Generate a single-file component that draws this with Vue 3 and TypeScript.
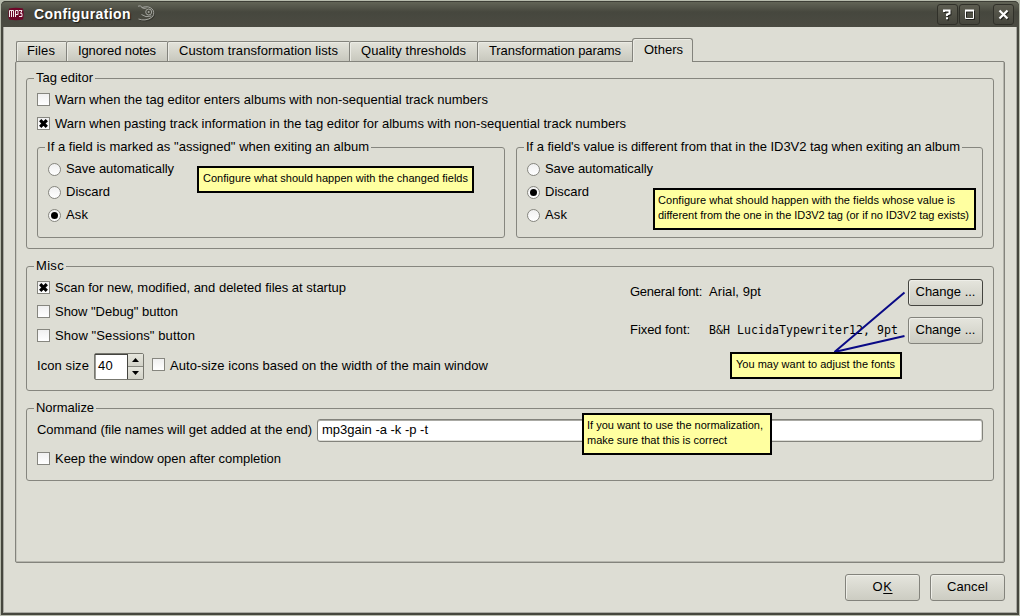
<script setup lang="ts">
import { ref } from 'vue'

interface Tab { label: string; width: number; text: number; lead: number }
interface Option { label: string; text: number }
interface Note { id: string; lines: Option[] }

const tabs: Tab[] = [
  { label: 'Files', width: 50, text: 28, lead: 10 },
  { label: 'Ignored notes', width: 101, text: 78, lead: 11 },
  { label: 'Custom transformation lists', width: 182, text: 159, lead: 11 },
  { label: 'Quality thresholds', width: 128, text: 105, lead: 11 },
  { label: 'Transformation params', width: 155, text: 132, lead: 11 },
  { label: 'Others', width: 61, text: 39, lead: 11 },
]
const activeTab = ref('Others')

const exitOptions: Option[] = [
  { label: 'Save automatically', text: 108 },
  { label: 'Discard', text: 44 },
  { label: 'Ask', text: 22 },
]
const exitGroups = ref([
  { title: 'If a field is marked as "assigned" when exiting an album', text: 322, selected: 'Ask' },
  { title: "If a field's value is different from that in the ID3V2 tag when exiting an album", text: 434, selected: 'Discard' },
])

const tagChecks = ref([
  { label: 'Warn when the tag editor enters albums with non-sequential track numbers', text: 433, on: false },
  { label: 'Warn when pasting track information in the tag editor for albums with non-sequential track numbers', text: 571, on: true },
])
const miscChecks = ref([
  { label: 'Scan for new, modified, and deleted files at startup', text: 291, on: true },
  { label: 'Show "Debug" button', text: 123, on: false },
  { label: 'Show "Sessions" button', text: 140, on: false },
])
const autoSize = ref(false)
const keepOpen = ref(false)

const notes: Note[] = [
  { id: 'changed', lines: [{ label: 'Configure what should happen with the changed fields', text: 265 }] },
  {
    id: 'differs',
    lines: [
      { label: 'Configure what should happen with the fields whose value is', text: 297 },
      { label: 'different from the one in the ID3V2 tag (or if no ID3V2 tag exists)', text: 311 },
    ],
  },
  { id: 'fonts', lines: [{ label: 'You may want to adjust the fonts', text: 159 }] },
  {
    id: 'gain',
    lines: [
      { label: 'If you want to use the normalization,', text: 176 },
      { label: 'make sure that this is correct', text: 140 },
    ],
  },
]

// Tracks a label so that it fills the given width in pixels.
const vFit = {
  mounted(el: HTMLElement, binding: { value: number }) {
    const range = document.createRange()
    range.selectNodeContents(el)
    const natural = range.getBoundingClientRect().width
    const count = (el.textContent ?? '').length
    el.style.letterSpacing = `${((binding.value - natural) / count).toFixed(4)}px`
  },
}
</script>

<template>
  <div class="window">
    <div class="frame">
      <header class="titlebar">
        <svg class="app-icon" width="16" height="14" viewBox="0 0 16 14">
          <path d="M1 1.5Q8 0 15 1.5Q16.4 7 15 12.5Q8 14 1 12.5Q-.4 7 1 1.5Z" fill="#6d0628" />
          <path d="M1.5 10V3.5H5.5V10M3.5 3.5V10M7.5 10V3.5H10V7.5H7.5M11 3.5H14L12.5 6.5H14V9.5H11" fill="none" stroke="#f4e8ec" stroke-width="1" />
        </svg>
        <span v-fit="97" class="title">Configuration</span>
        <svg class="swirl" width="20" height="18" viewBox="0 0 20 18" fill="none">
          <g stroke="#2a2a25" transform="translate(1 1)" opacity=".6">
            <path d="M14 3.5Q18.5 9 14.5 12.5Q9 16.5 1.5 14" />
          </g>
          <g stroke="#a3a49e">
            <path d="M1 1.2L3.5 .8L5 2.5Q12 0 16 5Q18 10 14.5 12.5Q8 16.5 1.5 14M4.5 2.5Q7 4 9.5 3M4.5 9.5Q8.5 13 14.5 11" />
            <circle cx="11.7" cy="7" r="3" />
          </g>
          <circle cx="11.7" cy="7" r="1" fill="#a3a49e" />
        </svg>
        <div class="controls">
          <button class="control" aria-label="Help">
            <svg width="19" height="19" viewBox="0 0 19 19" fill="none" stroke-width="2">
              <path d="M7 8V6.5H12.5V9.5L10 10.5V12M10 13.5V15.5" stroke="#22221e" />
              <path d="M6 7V5.5H11.5V8.5L9 9.5V11M9 12.2V14.2" stroke="#fff" />
            </svg>
          </button>
          <button class="control" aria-label="Maximize">
            <svg width="19" height="19" viewBox="0 0 19 19" fill="none">
              <path d="M6.5 12V7H13M14.5 6V14.5H6" stroke="#22221e" />
              <path d="M5.5 5.5H13.5V13.5H5.5Z" stroke="#fff" />
              <path d="M5 5.5H14" stroke="#fff" stroke-width="2" />
            </svg>
          </button>
          <button class="control close" aria-label="Close">
            <svg width="19" height="19" viewBox="0 0 19 19" fill="none" stroke-width="2.2">
              <path d="M6.5 6.5L14.5 14.5M14.5 6.5L6.5 14.5" stroke="#22221e" />
              <path d="M5.5 5.5L13.5 13.5M13.5 5.5L5.5 13.5" stroke="#fff" />
            </svg>
          </button>
        </div>
      </header>

      <main class="client">
        <nav class="tabs">
          <button
            v-for="tab in tabs"
            :key="tab.label"
            class="tab"
            :class="{ active: tab.label === activeTab }"
            :style="{ width: tab.width + 'px', paddingLeft: tab.lead + 'px' }"
            @click="activeTab = tab.label"
          ><span v-fit="tab.text">{{ tab.label }}</span></button>
        </nav>

        <section class="pane">
          <div class="group tag-editor">
            <div class="legend"><span v-fit="57">Tag editor</span></div>
            <div v-for="c in tagChecks" :key="c.label" class="check-row" @click="c.on = !c.on">
              <span class="box"><svg v-if="c.on" width="11" height="11" viewBox="0 0 11 11"><path d="M2.2 2.2L8.8 8.8M8.8 2.2L2.2 8.8" stroke="#000" stroke-width="3.2" /></svg></span>
              <span v-fit="c.text" class="label">{{ c.label }}</span>
            </div>
            <div class="exit-groups">
              <div v-for="g in exitGroups" :key="g.title" class="group exit">
                <div class="legend"><span v-fit="g.text">{{ g.title }}</span></div>
                <div v-for="o in exitOptions" :key="o.label" class="radio-row" @click="g.selected = o.label">
                  <span class="radio" :class="{ on: g.selected === o.label }"></span>
                  <span v-fit="o.text" class="label">{{ o.label }}</span>
                </div>
              </div>
            </div>
          </div>

          <div class="group misc">
            <div class="legend"><span v-fit="28">Misc</span></div>
            <div class="columns">
              <div class="left">
                <div v-for="c in miscChecks" :key="c.label" class="check-row" @click="c.on = !c.on">
                  <span class="box"><svg v-if="c.on" width="11" height="11" viewBox="0 0 11 11"><path d="M2.2 2.2L8.8 8.8M8.8 2.2L2.2 8.8" stroke="#000" stroke-width="3.2" /></svg></span>
                  <span v-fit="c.text" class="label">{{ c.label }}</span>
                </div>
                <div class="size-row">
                  <span class="size-label"><span v-fit="52">Icon size</span></span>
                  <div class="spin">
                    <div class="value"><span v-fit="15">40</span></div>
                    <div class="steps">
                      <span class="step"><svg width="7" height="4" viewBox="0 0 7 4"><path d="M0 4L3.5 0L7 4Z" /></svg></span>
                      <span class="step down"><svg width="7" height="4" viewBox="0 0 7 4"><path d="M0 0L3.5 4L7 0Z" /></svg></span>
                    </div>
                  </div>
                  <div class="check-row" @click="autoSize = !autoSize">
                    <span class="box"></span>
                    <span v-fit="318" class="label">Auto-size icons based on the width of the main window</span>
                  </div>
                </div>
              </div>
              <div class="fonts">
                <div class="font-row">
                  <span class="font-name"><span v-fit="72">General font:</span></span>
                  <span class="font-value"><span v-fit="52">Arial, 9pt</span></span>
                  <button class="button focused"><span v-fit="60">Change ...</span></button>
                </div>
                <div class="font-row">
                  <span class="font-name"><span v-fit="60">Fixed font:</span></span>
                  <span class="font-value mono"><span v-fit="189">B&amp;H LucidaTypewriter12, 9pt</span></span>
                  <button class="button"><span v-fit="60">Change ...</span></button>
                </div>
              </div>
            </div>
          </div>

          <div class="group normalize">
            <div class="legend"><span v-fit="58">Normalize</span></div>
            <div class="command-row">
              <span class="command-label"><span v-fit="275">Command (file names will get added at the end)</span></span>
              <div class="field"><span v-fit="106">mp3gain -a -k -p -t</span></div>
            </div>
            <div class="check-row" @click="keepOpen = !keepOpen">
              <span class="box"></span>
              <span v-fit="226" class="label">Keep the window open after completion</span>
            </div>
          </div>
        </section>

        <footer class="actions">
          <button class="button"><span v-fit="20">O<u>K</u></span></button>
          <button class="button"><span v-fit="41">Cancel</span></button>
        </footer>
      </main>
    </div>

    <svg class="pointers" width="76" height="66" viewBox="0 0 76 66">
      <path d="M74.5 2.5L4.5 62L74.5 46" fill="none" stroke="#0a0a86" stroke-width="2" />
    </svg>
    <div v-for="n in notes" :key="n.id" class="note" :class="n.id">
      <div v-for="l in n.lines" :key="l.label"><span v-fit="l.text">{{ l.label }}</span></div>
    </div>
  </div>
</template>

<style>
html, body { margin: 0; overflow: hidden; background: #c8c8c0; }
</style>

<style scoped>
.window, .window * { box-sizing: border-box; }
.window {
  position: relative;
  width: 1020px;
  height: 616px;
  padding: 1px;
  background: #b7bbad;
  font: 13px/16px "Liberation Sans", Arial, sans-serif;
  color: #000;
  white-space: nowrap;
  cursor: default;
}
.window span { white-space: pre; }
button { font: inherit; color: inherit; margin: 0; padding: 0; text-align: left; flex: none; }
svg { display: block; flex: none; }
.frame {
  height: 614px;
  padding: 0 1px 2px 1px;
  border-radius: 5px 5px 0 0;
  background: #46473e;
  border: 0 solid #46473e;
  border-width: 0 1px 0 1px;
}
.titlebar {
  display: flex;
  height: 26px;
  margin: 0 -2px;
  padding-left: 7px;
  border-top: 1px solid #3d3e36;
  border-radius: 5px 5px 0 0;
  background: linear-gradient(#626457 0, #46473e 10px, #4b4b42 25px);
}
.app-icon { margin-top: 5px; }
.title {
  width: 97px;
  margin: 4px 0 0 10px;
  font-weight: bold;
  font-size: 14px;
  color: #fff;
  text-shadow: 1px 1px 1px #1c1c18;
}
.swirl { margin: 3px 0 0 6px; }
.controls { display: flex; margin: 2px 5px 0 auto; gap: 1px; }
.control {
  width: 21px;
  height: 21px;
  border: 1px solid #303029;
  border-radius: 3px;
  background: linear-gradient(#5c5c50, #46463d);
}
.close { margin-left: 12px; }
.client {
  height: 586px;
  padding: 11px 11px 0;
  border: 1px solid #a9a9a2;
  border-top: 0;
  background: #ddddd4;
}
.tabs { display: flex; align-items: flex-end; height: 24px; padding-left: 1px; position: relative; }
.tab {
  height: 21px;
  border: 1px solid #83837c;
  border-right-width: 0;
  border-radius: 2px 0 0 0;
  background: linear-gradient(#e3e3da, #c8c8be);
  box-shadow: inset 1px 1px #ebebe4;
}
.tab span { position: relative; top: -1px; }
.tab.active {
  height: 24px;
  border-right-width: 1px;
  border-bottom: 0;
  border-radius: 3px 3px 0 0;
  background: #ddddd4;
}
.pane {
  height: 502px;
  margin-top: -1px;
  padding: 16px 10px 0;
  border: 1px solid #83837c;
  border-radius: 2px;
  box-shadow: inset -1px -1px #b6b6ae, inset 1px 0 #c9c9c0;
}
.group {
  padding: 0 10px;
  border: 1px solid #86867f;
  border-radius: 3px;
}
.legend {
  width: fit-content;
  height: 16px;
  margin: -9px 0 2px -3px;
  padding: 0 2px;
  background: #ddddd4;
}
.tag-editor { height: 171px; }
.misc { height: 125px; margin-top: 17px; }
.normalize { height: 73px; margin-top: 17px; }
.check-row { display: flex; height: 24px; }
.box {
  flex: none;
  width: 13px;
  height: 13px;
  margin-top: 5px;
  border: 1px solid #86867f;
  background: linear-gradient(#f0f0f0, #fff);
}
.check-row .label { margin: 4px 0 0 5px; }
.exit-groups { display: flex; gap: 11px; margin-top: 11px; }
.exit { width: 468px; height: 91px; }
.exit + .exit { width: 467px; }
.exit > .legend { margin-bottom: 3px; }
.radio-row { display: flex; height: 23px; }
.radio {
  display: flex;
  flex: none;
  align-items: center;
  justify-content: center;
  width: 13px;
  height: 13px;
  margin-top: 5px;
  border: 1px solid #86867f;
  border-radius: 50%;
  background: linear-gradient(#f0f0f0, #fff);
}
.radio.on::after { content: ""; width: 7px; height: 7px; border-radius: 50%; background: #000; }
.radio-row .label { margin: 3px 0 0 5px; }
.columns { display: flex; justify-content: space-between; }
.size-row { display: flex; margin-top: 5px; }
.size-label { width: 57px; padding-top: 5px; }
.spin { display: flex; width: 50px; height: 27px; border: 1px solid #77776f; border-radius: 2px; background: #d8d8ce; }
.value {
  width: 33px;
  padding: 3px 0 0 3px;
  background: #fff;
  border: 1px solid #44443f;
  border-width: 1px 1px 0 0;
  box-shadow: inset 1px 0 #9a9a94;
}
.steps { flex: 1; display: grid; grid-template-rows: 12px 13px; }
.step { display: grid; place-items: center; background: linear-gradient(#e6e6dd, #d2d2c8); }
.step.down { border-top: 1px solid #86867f; }
.size-row .check-row { margin-left: 8px; }
.size-row .check-row .label { margin-top: 5px; }
.fonts { width: 353px; padding-top: 3px; }
.font-row { display: flex; height: 38px; }
.font-name { width: 79px; padding-top: 5px; }
.font-value { width: 199px; padding-top: 5px; }
.mono { font-family: "DejaVu Sans Mono", monospace; font-size: 11.5px; }
.button {
  width: 75px;
  height: 27px;
  padding-bottom: 2px;
  border: 1px solid #83837c;
  border-radius: 3px;
  background: linear-gradient(#e5e5dd, #ccccc2);
  box-shadow: inset 1px 1px #eeeee8;
  text-align: center;
}
.button u { text-underline-offset: 2px; text-decoration-thickness: 1px; }
.focused { border-color: #44443f; }
.command-row { display: flex; height: 33px; padding-top: 1px; }
.command-label { width: 280px; padding-top: 3px; }
.field {
  flex: 1;
  height: 23px;
  padding: 2px 4px;
  border: 1px solid #83837c;
  border-radius: 3px;
  background: #fff;
  box-shadow: inset 0 1px #aaaaa4, inset -1px -1px #deded8;
}
.normalize > .check-row { margin-top: -4px; }
.actions { display: flex; justify-content: flex-end; gap: 10px; padding-top: 11px; }
.note {
  position: absolute;
  padding: 3px 3px 0;
  border: 2px solid #000;
  background: #ffffa0;
  font-size: 11px;
  line-height: 15px;
}
.changed { left: 197px; top: 166px; width: 277px; height: 27px; padding-left: 4px; }
.differs { left: 653px; top: 188px; width: 323px; height: 42px; }
.fonts.note { left: 730px; top: 352px; width: 172px; height: 27px; padding-left: 4px; }
.gain { left: 582px; top: 413px; width: 190px; height: 42px; }
.pointers { position: absolute; left: 830px; top: 290px; }
</style>
